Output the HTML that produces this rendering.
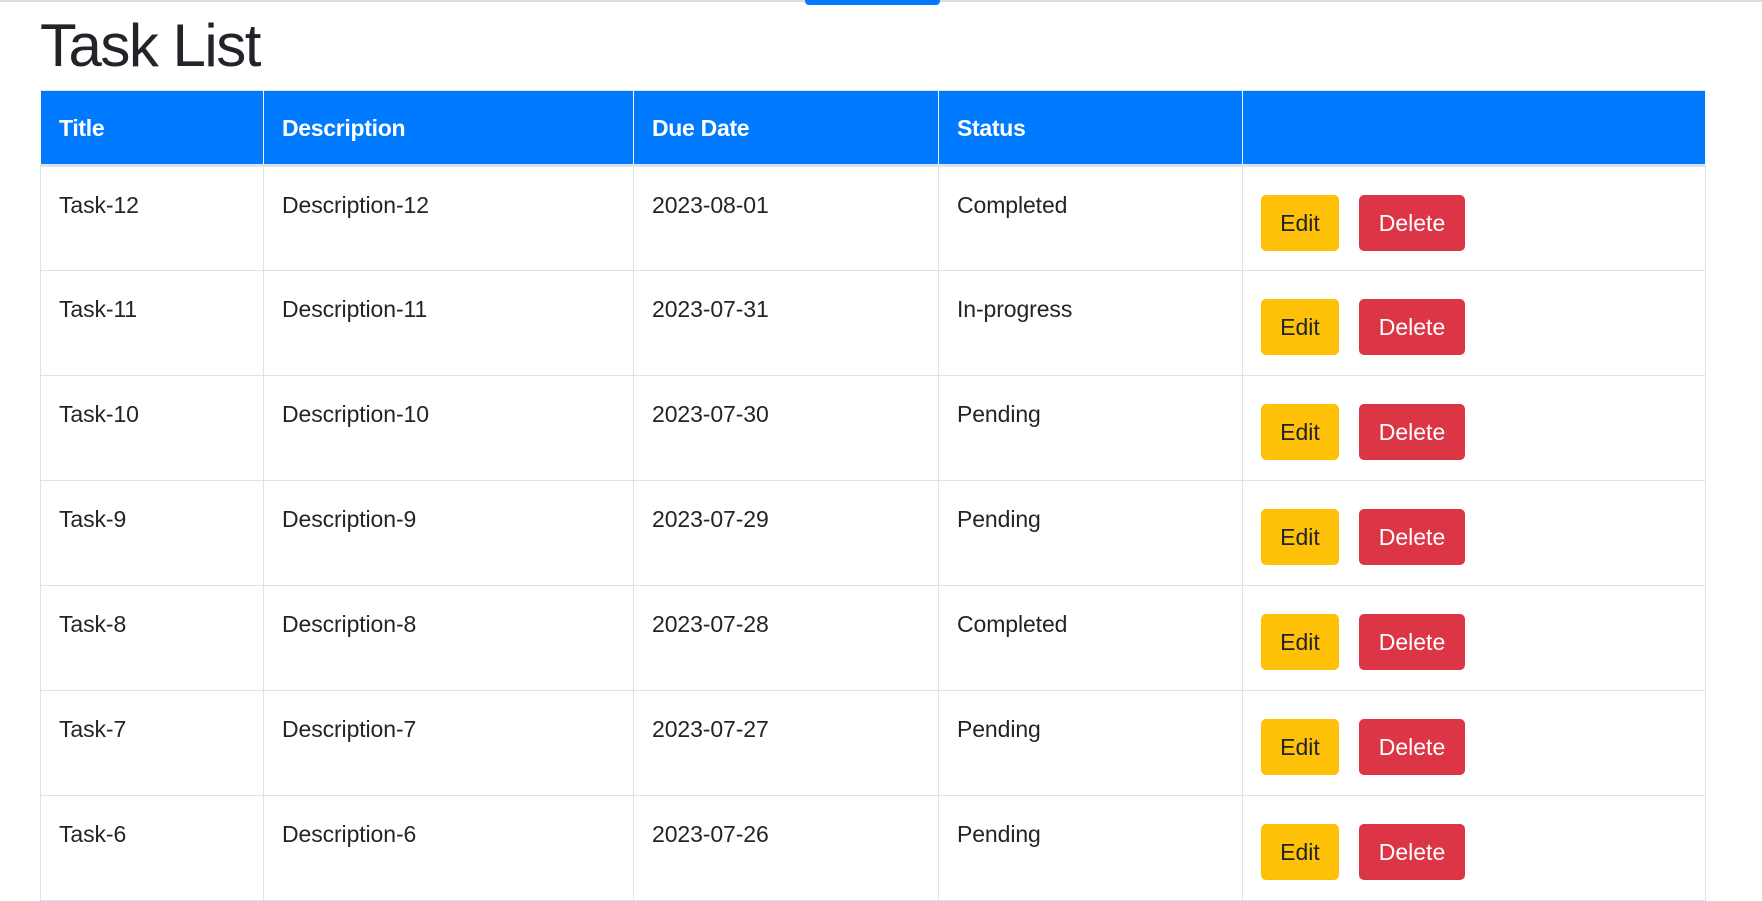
<!DOCTYPE html>
<html><head><style>
body{margin:0;background:#fff;font-family:"Liberation Sans",sans-serif;color:#212529;width:1762px;height:900px;overflow:hidden;position:relative}
.topline{position:absolute;top:0;left:0;width:1762px;height:2px;background:#dcdcdc}
.topbar{position:absolute;top:0;left:805px;width:135px;height:5px;background:#007bff;border-radius:0 0 4px 4px}
h1{position:absolute;left:40px;top:11px;margin:0;font-size:60px;font-weight:400;letter-spacing:-1.5px}
table{position:absolute;left:40px;top:90px;border-collapse:collapse;width:1665px;table-layout:fixed}
th,td{border:1px solid #dee2e6;text-align:left;vertical-align:top;font-size:23px}
th{background:#007bff;color:#fff;font-weight:bold;height:75px;box-sizing:border-box;padding:24px 18px 0;border-color:#fff;border-bottom:3px solid #dee2e6;border-top:1px solid #dee2e6;letter-spacing:-0.3px}
td{height:105px;box-sizing:border-box;padding:25px 18px 0;letter-spacing:-0.1px}
.btn{display:inline-block;height:56px;line-height:56px;border-radius:5px;font-size:23px;text-align:center;margin-top:4px;vertical-align:top;letter-spacing:0}
.e{background:#ffc107;color:#212529;width:78px}
.d{background:#dc3545;color:#fff;width:106px;margin-left:20px}
.b{padding-top:0 !important}
.b div{padding-top:24px}
</style></head><body>
<div class="topline"></div><div class="topbar"></div>
<h1>Task List</h1>
<table>
<colgroup><col style="width:223px"><col style="width:370px"><col style="width:305px"><col style="width:304px"><col style="width:463px"></colgroup>
<tr><th>Title</th><th>Description</th><th>Due Date</th><th>Status</th><th></th></tr>
<tr><td>Task-12</td><td>Description-12</td><td>2023-08-01</td><td>Completed</td><td class="b"><div><span class="btn e">Edit</span><span class="btn d">Delete</span></div></td></tr>
<tr><td>Task-11</td><td>Description-11</td><td>2023-07-31</td><td>In-progress</td><td class="b"><div><span class="btn e">Edit</span><span class="btn d">Delete</span></div></td></tr>
<tr><td>Task-10</td><td>Description-10</td><td>2023-07-30</td><td>Pending</td><td class="b"><div><span class="btn e">Edit</span><span class="btn d">Delete</span></div></td></tr>
<tr><td>Task-9</td><td>Description-9</td><td>2023-07-29</td><td>Pending</td><td class="b"><div><span class="btn e">Edit</span><span class="btn d">Delete</span></div></td></tr>
<tr><td>Task-8</td><td>Description-8</td><td>2023-07-28</td><td>Completed</td><td class="b"><div><span class="btn e">Edit</span><span class="btn d">Delete</span></div></td></tr>
<tr><td>Task-7</td><td>Description-7</td><td>2023-07-27</td><td>Pending</td><td class="b"><div><span class="btn e">Edit</span><span class="btn d">Delete</span></div></td></tr>
<tr><td>Task-6</td><td>Description-6</td><td>2023-07-26</td><td>Pending</td><td class="b"><div><span class="btn e">Edit</span><span class="btn d">Delete</span></div></td></tr>
</table>
</body></html>
